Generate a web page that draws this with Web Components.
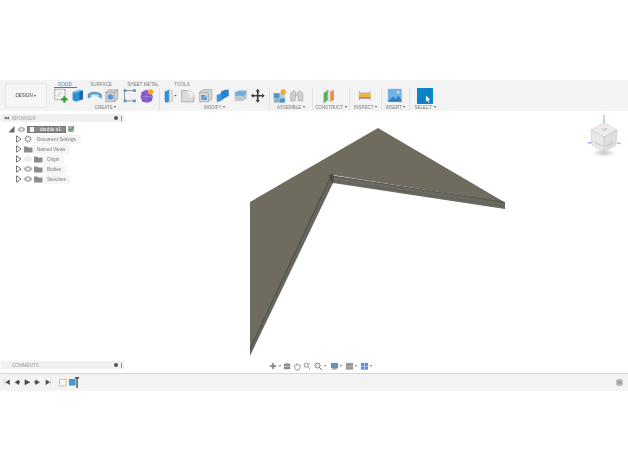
<!DOCTYPE html>
<html><head><meta charset="utf-8"><title>Design</title>
<style>html,body{margin:0;background:#fff;font-family:"Liberation Sans",Arial,sans-serif}</style></head>
<body>
<fusion-app></fusion-app>
<script>
const ICONS={
sketch:`<rect x="2" y="1.500" width="12" height="12" fill="#f4f4f4" stroke="#888" stroke-dasharray="1.500 .6"/><path d="M5 10l5-6" stroke="#aaa"/><path d="M12 9.500h2.500v2.500H17v2.500h-2.500V17H12v-2.500H9.500V12H12z" fill="#2e9e3c"/>`,
box:`<path d="M3 5l8-3 4 1v10l-8 3-4-2z" fill="#2f8fd8"/><path d="M11 2l4 1v10l-4 1z" fill="#1c64a8"/><path d="M3 5l8-3 4 1-8 2.500z" fill="#7cc0ee"/>`,
sweep:`<path d="M1 8c1-5 14-5 16 0v5c-2-3-6-3-8-3s-6 0-8 3z" fill="#4a9bd8"/><path d="M1 8c3-3 13-3 16 0" fill="none" stroke="#999" stroke-width="1.500"/><ellipse cx="9" cy="9" rx="5" ry="1.500" fill="#dfeaf3"/>`,
hole:`<path d="M2 5l4-3h10v11l-4 3H2z" fill="#d2d2d2" stroke="#999" stroke-width=".8"/><path d="M2 5h10v11M12 5l4-3" fill="none" stroke="#999" stroke-width=".8"/><circle cx="7.500" cy="10.500" r="3.200" fill="#5a9ad0"/>`,
nodes:`<path d="M4 3h10M3 4v10M4 15h10" stroke="#777" stroke-width=".9" fill="none"/><g fill="#3b96dc"><rect x="2" y="1.500" width="3" height="3"/><rect x="13" y="1.500" width="3" height="3"/><rect x="2" y="13.500" width="3" height="3"/><rect x="13" y="13.500" width="3" height="3"/></g>`,
form:`<path d="M3 5l5-3 6 2 2 6-1 5-5 2-6-1-2-5z" fill="#8257c8"/><path d="M8 2v15M1 10h15" stroke="#a98ae0" stroke-width=".8"/><circle cx="13.500" cy="4.500" r="3" fill="#f5a623"/>`,
press:`<path d="M2 4l5-2 2 1v12l-5 2-2-1z" fill="#2f8fd8"/><path d="M7 2l4 1v12l-4 2z" fill="#e2e2e2" stroke="#aaa" stroke-width=".5"/><path d="M13 8h3l-1.500 2z" fill="#555"/>`,
fillet:`<path d="M2 3h7c4 0 7 3 7 7v6H2z" fill="#dcdcdc" stroke="#999" stroke-width=".8"/><path d="M9 3c4 0 7 3 7 7l-4 1c0-3-2-4-3-4z" fill="#eee"/>`,
chamfer:`<path d="M2 5l4-3h10v11l-4 3H2z" fill="#dadada" stroke="#999" stroke-width=".8"/><path d="M2 5h10v11" fill="none" stroke="#999" stroke-width=".8"/><path d="M4 14V8h5z M4 14h6V9z" fill="#4a97d6"/>`,
combine:`<path d="M2 8l5-2h3v7l-5 3H2z" fill="#3f97dd"/><path d="M7 4l5-2h4v7l-5 3H7z" fill="#2a82ce"/>`,
offset:`<path d="M2 6l4-3h10v4l-4 3H2z" fill="#7db4dd"/><path d="M2 10h10l4-3v5l-4 3H2z" fill="#c2c7cc"/><path d="M2 6h10v4" stroke="#4d8fc4" fill="none" stroke-width=".6"/>`,
move:`<path d="M9 1l2.500 3H10v4h4V6.500L17 9l-3 2.500V10h-4v4h1.500L9 17l-2.500-3H8v-4H4v1.500L1 9l3-2.500V8h4V4H6.500z" fill="#3d3d3d"/>`,
comp:`<rect x="2" y="6" width="7" height="6" fill="#4a94d0"/><rect x="9" y="6" width="6" height="6" fill="#b4cde0"/><rect x="2" y="12" width="7" height="5" fill="#9ab0c2"/><rect x="9" y="12" width="6" height="5" fill="#4a94d0"/><circle cx="13" cy="4.500" r="3" fill="#f5a623"/>`,
joint:`<path d="M2 15V6l4-3 2 2-1 10zM16 15V6l-4-3-2 2 1 10z" fill="#d0d0d0" stroke="#a0a0a0" stroke-width=".7"/><path d="M7 8l4 0" stroke="#a0a0a0"/>`,
plane:`<path d="M3 6l5-4v12l-5 4z" fill="#58b05a"/><path d="M8 2l3 2v12l-3-2z" fill="#e8e8e8" stroke="#aaa" stroke-width=".5"/><path d="M11 4l4-2v12l-4 2z" fill="#ef8e3a"/>`,
measure:`<path d="M3 4v2h12V4M3 14v-2h12v2" fill="none" stroke="#888"/><rect x="2" y="7" width="14" height="4" fill="#f3b23d"/><path d="M2 11h14" stroke="#c9800f"/>`,
picture:`<rect x="1" y="1" width="16" height="15" fill="#6fb3e6"/><path d="M1 16l6-6 3 3 3-4 4 5v2H1z" fill="#2f7fc4"/><circle cx="13" cy="5" r="1.500" fill="#d7ecfa"/>`,
eye:`<g transform="translate(0 1)"><path d="M.5 4C2 1.800 4 1 5 1s3 .8 4.500 3C8 6.200 6 7 5 7S2 6.200.5 4z" fill="#b5b5b5"/><circle cx="5" cy="4" r="1.300" fill="#f2f2f2"/></g>`,
eyeoff:`<g transform="translate(0 1)"><path d="M.5 4C2 1.800 4 1 5 1s3 .8 4.500 3C8 6.200 6 7 5 7S2 6.200.5 4z" fill="#ececec"/></g>`,
folder:`<g transform="translate(0 1)"><path d="M1 1.500h3l1 1h4.500V7.500H1z" fill="#8c8c8c"/></g>`,
gear:`<circle cx="5" cy="5" r="2.600" fill="none" stroke="#8f8f8f" stroke-width="1.800" stroke-dasharray="1.400 .6"/>`,
tri:`<path d="M1.500 .8l4.500 3.200L1.500 7.200z" fill="#fff" stroke="#666" stroke-width=".9"/>`
};
const svg=(n,s=18,vb=18)=>`<svg width="${s}" height="${s}" viewBox="0 0 ${vb} ${vb}" style="display:block">${ICONS[n]}</svg>`;

class ToolGroup extends HTMLElement{
  constructor(){super();this.attachShadow({mode:"open"})}
  connectedCallback(){
    const icons=(this.getAttribute("icons")||"").split(" ").filter(Boolean);
    const w=this.getAttribute("w"),pr=this.getAttribute("pr")||0;
    this.shadowRoot.innerHTML=`<style>
    :host{display:flex;flex-direction:column;width:${w}px;box-sizing:border-box;border-right:1px solid #e0e0e0;height:22px;flex:none}
    :host([last]){border-right:0}
    .i{display:flex;justify-content:center;height:16px;align-items:center;padding-right:${pr}px}
    .i>div{width:17.500px;display:flex;justify-content:center}
    .l{font-size:4.500px;line-height:5px;margin-top:1px;color:#7a7a7a;text-align:center;white-space:nowrap}
    .l::after{content:"";display:inline-block;border:1.500px solid transparent;border-top:2px solid #555;border-bottom:0;margin-left:1.500px;vertical-align:.6px}
    </style><div class="i">${icons.map(n=>`<div>${n==="select"?`<slot name="select"></slot>`:svg(n,15.500)}</div>`).join("")}</div><div class="l"><slot></slot></div>`;
  }
}
customElements.define("tool-group",ToolGroup);

class SelectIcon extends HTMLElement{
  constructor(){super();this.attachShadow({mode:"open"}).innerHTML=`<style>:host{display:block;width:16px;height:16px}</style>
  <svg width="16" height="16" viewBox="0 0 17 17" style="display:block"><rect width="17" height="17" fill="#0a82c8"/><rect x="1" y="1" width="15" height="15" fill="none" stroke="#2c9bd8" stroke-width=".6" stroke-dasharray="1 1"/><path d="M9.500 8l4.500 4.300-1.900.2 1 2.300-1.200.5-1-2.300-1.400 1.200z" fill="#fff"/></svg>`}
}
customElements.define("select-icon",SelectIcon);

class FusionToolbar extends HTMLElement{
  constructor(){super();this.attachShadow({mode:"open"}).innerHTML=`<style>
  :host{display:flex;height:31px;background:#f3f3f3;box-sizing:border-box;padding:3px 0 0 5px;flex:none}
  .design{width:42px;height:25px;box-sizing:border-box;border:1px solid #e6e6e6;border-radius:3px;background:#f6f6f6;display:flex;align-items:center;justify-content:center;font-size:4.500px;color:#444;margin-right:5px;flex:none;gap:1.500px}
  .design i{border:1.500px solid transparent;border-top:2px solid #555;border-bottom:0}
  .col{display:flex;flex-direction:column}
  .tabs{display:grid;grid-template-columns:26px 46px 38px 40px;height:5px;font-size:4.600px;line-height:4px;color:#7d7d7d;text-align:center}
  .tabs span:first-child{color:#2b86c9;position:relative}
  .tabs span:first-child::after{content:"";position:absolute;left:2px;right:1px;top:4px;height:1px;background:#2b86c9}
  .groups{display:flex}
  </style>
  <div class="design">DESIGN<i></i></div>
  <div class="col"><div class="tabs"><span>SOLID</span><span>SURFACE</span><span>SHEET METAL</span><span>TOOLS</span></div>
  <div class="groups">
   <tool-group w="108" pr="4" icons="sketch box sweep hole nodes form">CREATE</tool-group>
   <tool-group w="110" pr="1" icons="press fillet chamfer combine offset move">MODIFY</tool-group>
   <tool-group w="43" pr="6" icons="comp joint">ASSEMBLE</tool-group>
   <tool-group w="37" pr="4" icons="plane">CONSTRUCT</tool-group>
   <tool-group w="32" pr="2" icons="measure">INSPECT</tool-group>
   <tool-group w="28" pr="2" icons="picture">INSERT</tool-group>
   <tool-group w="30" last icons="select">SELECT<select-icon slot="select"></select-icon></tool-group>
  </div></div>`}
}
customElements.define("fusion-toolbar",FusionToolbar);

class PanelBar extends HTMLElement{
  constructor(){super();this.attachShadow({mode:"open"}).innerHTML=`<style>
  :host{display:flex;align-items:center;width:123px;height:8px;background:#f0f0f0;font-size:4.600px;color:#a0a0a0;box-sizing:border-box;padding:0 1px 0 3px}
  .h{width:8px;display:flex;align-items:center}
  .h svg{display:block}
  .t{flex:1}
  .d{width:4px;height:4px;border-radius:50%;background:#555;margin-right:3px}
  .b{width:1px;height:5px;background:#999;margin-right:1px}
  </style><div class="h"><slot name="lead"></slot></div><div class="t"><slot></slot></div><div class="d"></div><div class="b"></div>`}
}
customElements.define("panel-bar",PanelBar);

class TreeRow extends HTMLElement{
  constructor(){super();this.attachShadow({mode:"open"})}
  connectedCallback(){
    const a=(n)=>this.getAttribute(n);
    const icons=(a("icons")||"").split(" ").filter(Boolean);
    this.shadowRoot.innerHTML=`<style>
    :host{display:flex;align-items:center;height:10px;padding-left:14px;font-size:4.600px;color:#777}
    .t{width:8px;display:flex}
    .ic{width:10px;display:flex;justify-content:center}
    .chip{background:#f5f5f5;height:9px;line-height:9px;padding:0 ${a("pr")||4}px 0 4px;white-space:nowrap}
    </style><div class="t">${svg("tri",8,8)}</div>${icons.map(i=>`<div class="ic">${svg(i,10,10)}</div>`).join("")}<div class="chip"><slot></slot></div>`;
  }
}
customElements.define("tree-row",TreeRow);

class BrowserPanel extends HTMLElement{
  constructor(){super();this.attachShadow({mode:"open"}).innerHTML=`<style>
  :host{display:block;position:absolute;left:1px;top:3px;width:123px}
  .root{display:flex;align-items:center;height:10px;margin-top:2px;padding-left:7px;font-size:4.800px}
  .root>svg{display:block}
  .chip{display:flex;align-items:center;gap:6px;background:#8a8a8a;color:#fff;height:7px;width:39px;box-sizing:border-box;padding-left:2px;border:1px solid #777;margin-left:1px;white-space:nowrap}
  .doc{width:4px;height:5px;background:#f2f2f2;flex:none}
  </style>
  <panel-bar><svg slot="lead" width="5" height="4" viewBox="0 0 6 5"><path d="M0 2.500L3 .5v4zM3 2.500L6 .5v4z" fill="#555"/></svg>BROWSER</panel-bar>
  <div class="root"><svg width="7" height="8" viewBox="0 0 7 8"><path d="M6.500 1v6.500H.5z" fill="#666"/></svg>
   <span style="width:10px;display:flex;justify-content:center;margin-left:1px">${svg("eye",9,10)}</span>
   <div class="chip"><div class="doc"></div>double v1</div>
   <svg width="8" height="8" viewBox="0 0 8 8" style="margin-left:1px"><rect x="1" y="1" width="6" height="6" rx="1" fill="#a8a8a8"/><path d="M2 4l1.500 1.500L7 1.500" stroke="#2f8a3c" fill="none"/></svg></div>
  <tree-row icons="gear" pr="5">Document Settings</tree-row>
  <tree-row icons="folder" pr="5">Named Views</tree-row>
  <tree-row icons="eyeoff folder" pr="5">Origin</tree-row>
  <tree-row icons="eye folder" pr="5">Bodies</tree-row>
  <tree-row icons="eye folder" pr="4">Sketches</tree-row>`}
}
customElements.define("browser-panel",BrowserPanel);

class ModelCanvas extends HTMLElement{
  constructor(){super();this.attachShadow({mode:"open"}).innerHTML=`<style>:host{display:block;position:absolute;inset:0}svg{display:block}</style>
  <svg width="628" height="262" viewBox="0 111 628 262">
   <path d="M250 202L378 128 505 202.500 333 175 331 176 250 349z" fill="#6f6b5f"/>
   <path d="M333 176L505 202.500V209L333 183z" fill="#6a6a63"/>
   <path d="M333 176L505 202.500" stroke="#3d3c36" stroke-width=".8" fill="none"/>
   <path d="M333 181L505 206" stroke="#5a5a54" stroke-width=".6" fill="none"/>
   <path d="M331 176L333 183 250 356V349z" fill="#666660"/>
   <path d="M331 176L250 349" stroke="#3a3934" stroke-width=".8" fill="none"/>
   <path d="M329 175l4-1 1 3-1 7-2-3z" fill="#4a4943"/>
  </svg>`}
}
customElements.define("model-canvas",ModelCanvas);

class ViewCube extends HTMLElement{
  constructor(){super();this.attachShadow({mode:"open"}).innerHTML=`<style>:host{display:block;position:absolute;left:586px;top:3px;width:38px;height:46px}svg{display:block}text{font:3px "Liberation Sans",sans-serif;fill:#aaa;text-anchor:middle}</style>
  <svg width="38" height="46" viewBox="586 114 38 46">
   <defs><radialGradient id="s"><stop offset="0" stop-color="#c4c4c4"/><stop offset="1" stop-color="#fff"/></radialGradient></defs>
   <ellipse cx="604" cy="153" rx="12" ry="4" fill="url(#s)"/>
   <path d="M604 115v8" stroke="#9ad8a8" stroke-width="1.500"/>
   <path d="M588 143l4-.6" stroke="#a8a8ea" stroke-width="1.500"/>
   <path d="M617 143l4 .6" stroke="#f0a8a8" stroke-width="1.500"/>
   <path d="M604 123L617 130 604 137 591 130z" fill="#ededed" stroke="#c8c8c8" stroke-width=".6"/>
   <path d="M591 130L604 137V152L592 145z" fill="#e8e8e8" stroke="#c8c8c8" stroke-width=".6"/>
   <path d="M617 130L604 137V152L616 145z" fill="#dedede" stroke="#c8c8c8" stroke-width=".6"/>
   <text x="604" y="131">TOP</text>
   <text x="598" y="145" transform="rotate(28 598 145)" style="font-size:2.500px">FRONT</text>
   <text x="610.500" y="145" transform="rotate(-28 610.500 145)" style="font-size:2.500px">RIGHT</text>
  </svg>`}
}
customElements.define("view-cube",ViewCube);

class NavBar extends HTMLElement{
  constructor(){super();
  const c=`<i></i>`;
  const ic={
   orbit:`<path d="M4.500 1v7M1 4.500h7" stroke="#666" stroke-width="1.300"/><circle cx="4.500" cy="4.500" r="2" fill="#888"/>`,
   cam:`<rect x="1" y="2" width="7" height="6" fill="#8a8a8a"/><rect x="2.500" y="1" width="4" height="2" fill="#aaa"/><path d="M1 5h7" stroke="#ddd" stroke-width=".7"/>`,
   hand:`<path d="M2 4v3l1.500 2h3L8 6V3.500M2.500 4V2.500M4 4V1.500M5.500 4V1.500M7 4V2.500" stroke="#777" fill="none" stroke-width=".8"/>`,
   zoomf:`<circle cx="3.500" cy="3.500" r="2.300" fill="none" stroke="#888"/><path d="M5 5l3 3" stroke="#888"/><path d="M7 1v2M6 2h2" stroke="#aaa" stroke-width=".7"/>`,
   zoom:`<circle cx="4" cy="4" r="2.800" fill="#e7eef3" stroke="#777"/><path d="M6 6l3 3" stroke="#777" stroke-width="1.100"/>`,
   disp:`<rect x="1" y="1" width="8" height="6" fill="#6a8fb3"/><rect x="2.500" y="7" width="5" height="1.500" fill="#999"/>`,
   grid:`<rect x="1" y="1" width="8" height="7.500" fill="#9a9a9a"/><path d="M1 5h8" stroke="#bbb" stroke-width=".7"/>`,
   view:`<rect x="1" y="1" width="8" height="7.500" fill="#6a8fd0"/><path d="M5 1v7.500M1 4.800h8" stroke="#cfe0f5" stroke-width=".7"/>`
  };
  const b=(n,m,ml)=>`<span class="b" style="margin-left:${ml}px"><svg width="9" height="9" viewBox="0 0 10 10">${ic[n]}</svg>${m?c:""}</span>`;
  this.attachShadow({mode:"open"}).innerHTML=`<style>
  :host{display:flex;align-items:center;position:absolute;left:269px;top:250px;height:10px}
  .b{display:flex;align-items:center}
  svg{display:block}
  i{border:1.300px solid transparent;border-top:2px solid #777;border-bottom:0;margin-left:1px}
  </style>${b("orbit",1,0)}${b("cam",0,2)}${b("hand",0,1)}${b("zoomf",0,1)}${b("zoom",1,2)}${b("disp",1,4)}${b("grid",1,3)}${b("view",1,3)}`}
}
customElements.define("nav-bar",NavBar);

class TimeLine extends HTMLElement{
  constructor(){super();
  const ctl=[`<path d="M1 1v6M7 1L2 4l5 3z"/>`,`<path d="M6 1L1 4l5 3z"/><rect x="5" y="3" width="2" height="2"/>`,`<path d="M1 .5L7.500 4 1 7.500z"/>`,`<path d="M2 1l5 3-5 3z"/><rect x="1" y="3" width="2" height="2"/>`,`<path d="M1 1l5 3-5 3zM7 1v6"/>`];
  this.attachShadow({mode:"open"}).innerHTML=`<style>
  :host{display:flex;align-items:center;height:18px;box-sizing:border-box;background:#f3f3f3;border-top:1px solid #d8d8d8;padding-left:2px;padding-right:5px;flex:none}
  .c{width:10.200px;display:flex;justify-content:center}
  svg{display:block}
  .c svg path,.c svg rect{fill:#4a4a4a;stroke:#4a4a4a;stroke-width:.3}
  .items{display:flex;margin-left:6px;align-items:center;gap:2px}
  .sp{flex:1}
  .g{width:7px;height:7px;border-radius:50%;background:#9a9a9a;box-shadow:inset 0 0 0 1.800px #bdbdbd}
  </style>
  ${ctl.map(p=>`<div class="c"><svg width="6.500" height="6.500" viewBox="0 0 8 8">${p}</svg></div>`).join("")}
  <div class="items">
   <svg width="8" height="8" viewBox="0 0 8 8"><rect x=".5" y=".5" width="6.500" height="6.500" fill="#fafafa" stroke="#e8a23a" stroke-dasharray="1.500 .6"/></svg>
   <svg width="10" height="12" viewBox="0 0 10 12"><rect x="0" y="2" width="6.500" height="6.500" fill="#3f97dd"/><rect x="6" y="0" width="4" height="1.500" fill="#444"/><rect x="7.300" y="0" width="1.500" height="11" fill="#555"/></svg>
  </div><div class="sp"></div><div class="g"></div>`}
}
customElements.define("time-line",TimeLine);

class FusionApp extends HTMLElement{
  constructor(){super();this.attachShadow({mode:"open"}).innerHTML=`<style>
  :host{display:flex;flex-direction:column;width:628px;height:472px;padding-top:80px;box-sizing:border-box;background:#fff;font-family:"Liberation Sans",Arial,sans-serif;filter:blur(.4px);overflow:hidden}
  .work{position:relative;height:262px;flex:none}
  panel-bar{position:absolute;left:1px;top:250px}
  </style>
  <fusion-toolbar></fusion-toolbar>
  <div class="work">
   <model-canvas></model-canvas>
   <browser-panel></browser-panel>
   <view-cube></view-cube>
   <nav-bar></nav-bar>
   <panel-bar>COMMENTS</panel-bar>
  </div>
  <time-line></time-line>`}
}
customElements.define("fusion-app",FusionApp);
</script>
</body></html>
